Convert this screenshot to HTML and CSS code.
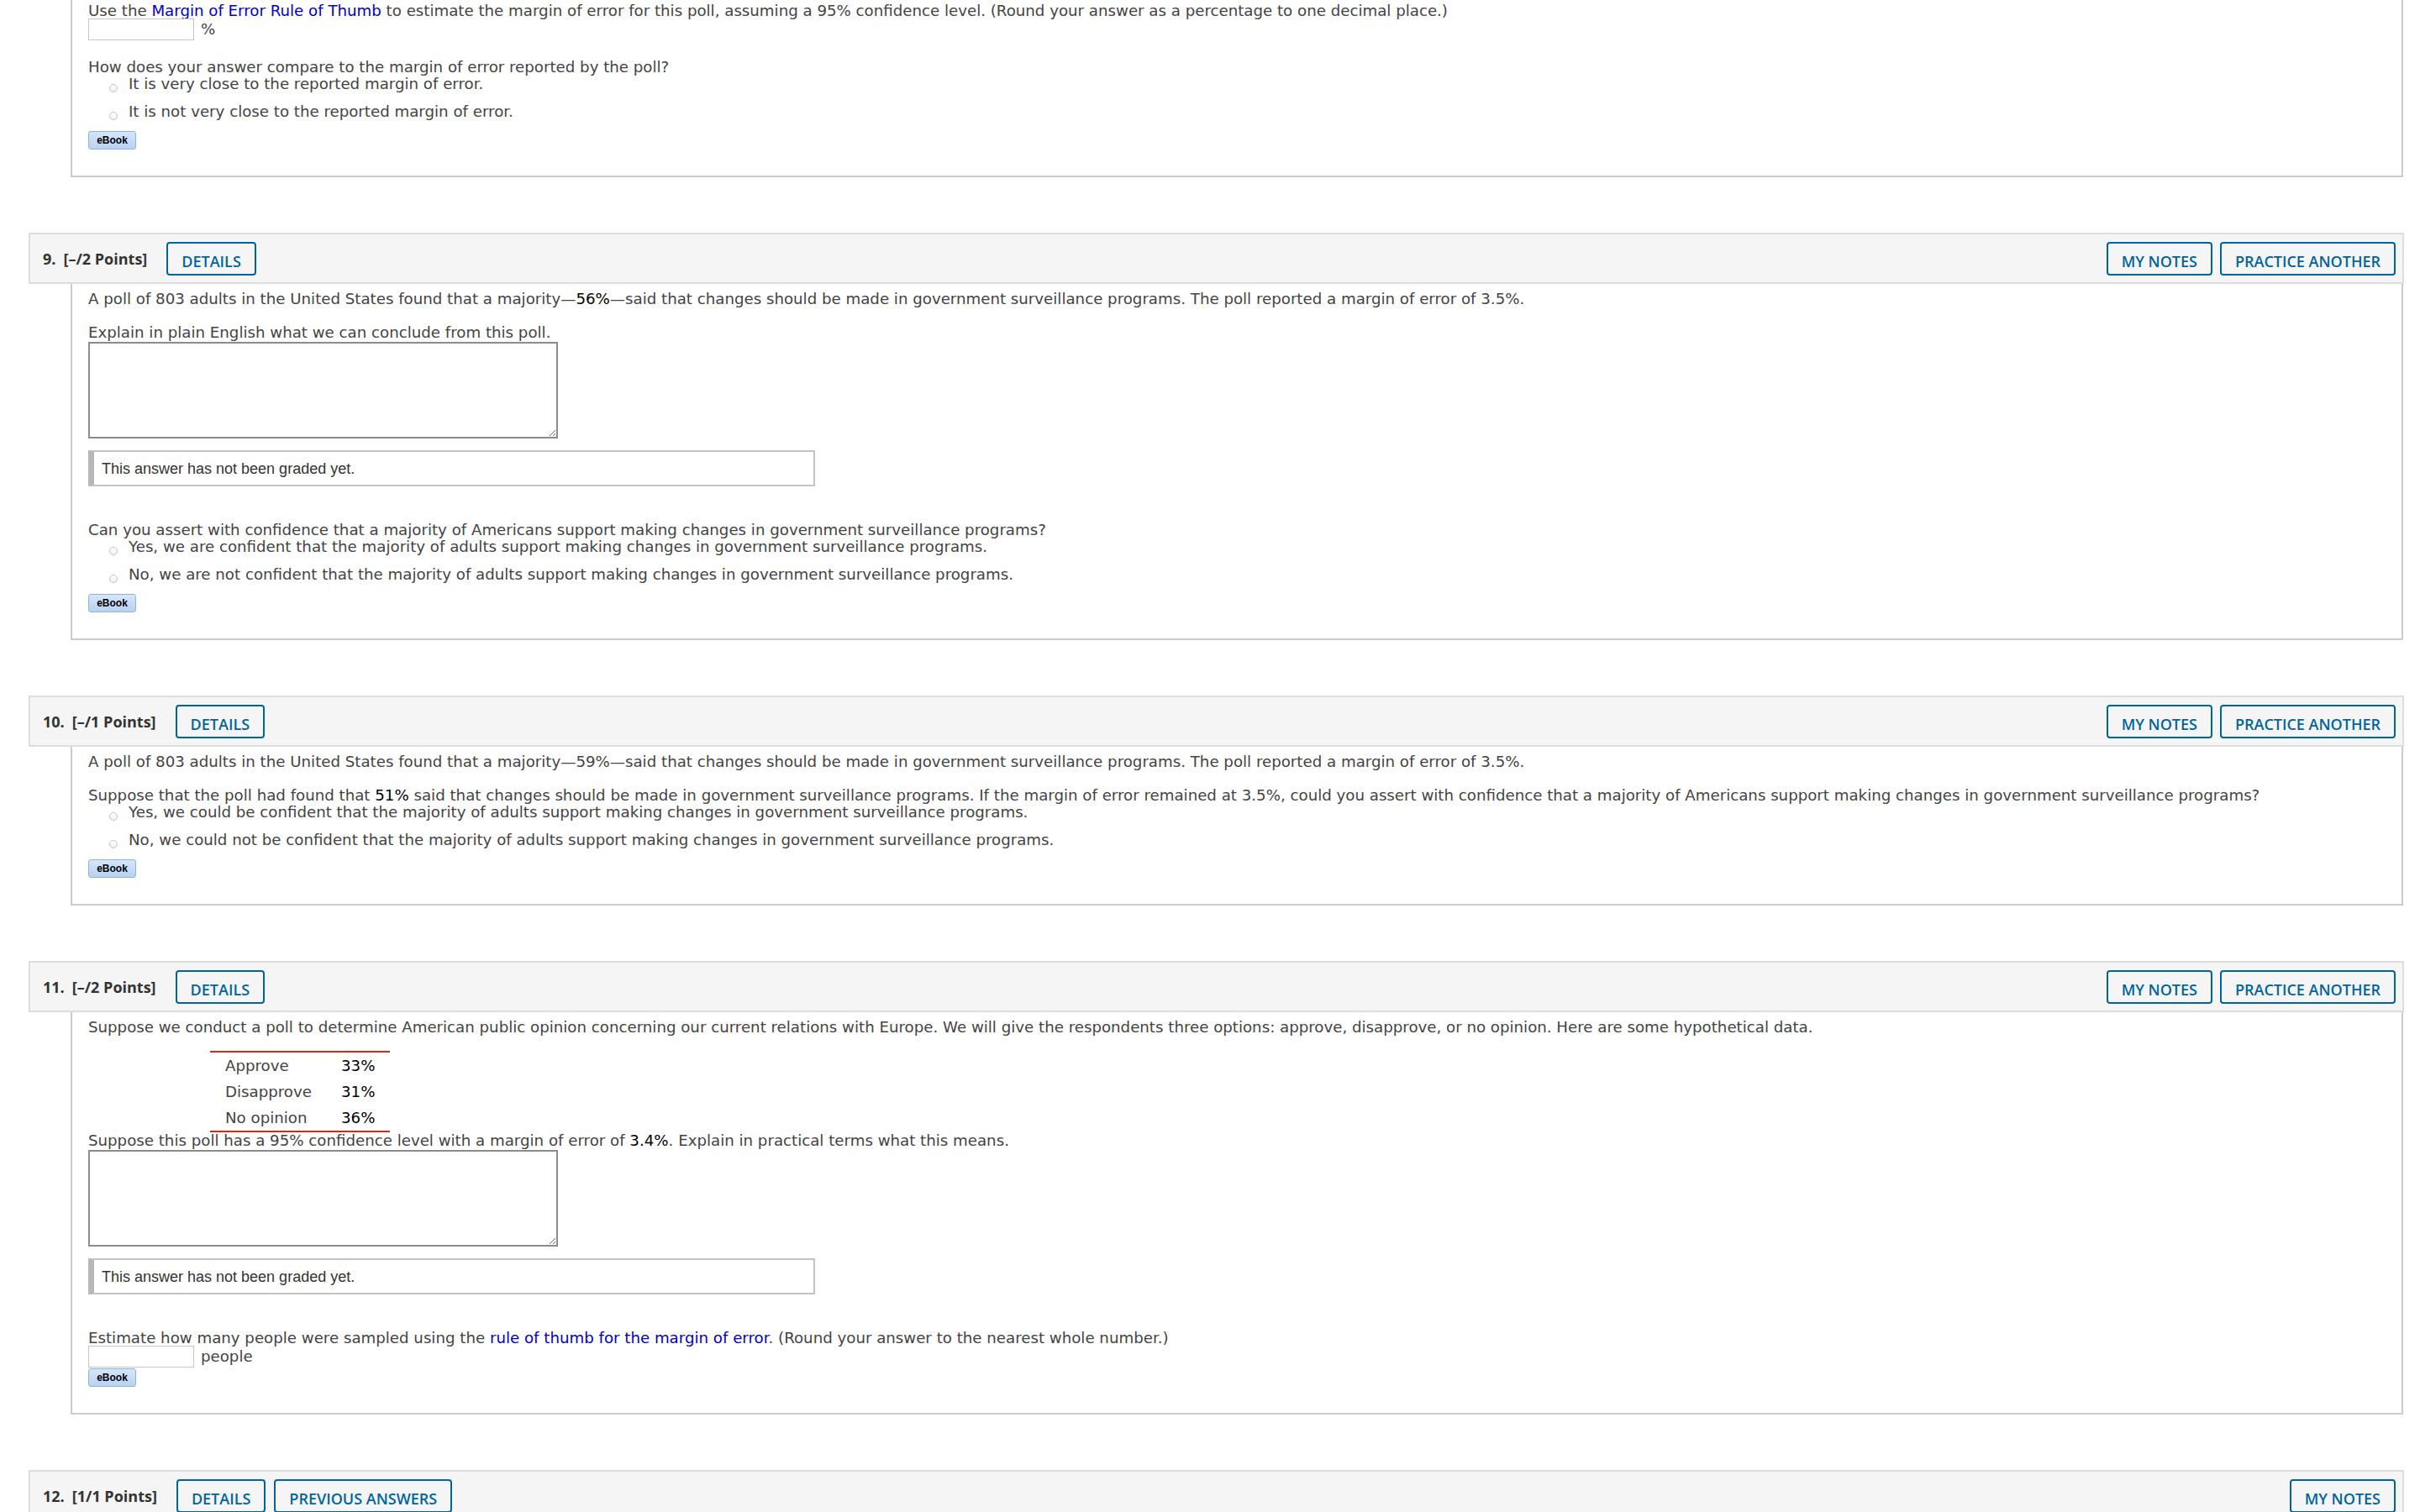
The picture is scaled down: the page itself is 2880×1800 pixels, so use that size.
FILE: index.html
```html
<!DOCTYPE html>
<html lang="en">
<head>
<meta charset="utf-8">
<title>Questions</title>
<link rel="stylesheet" href="styles.css">
</head>
<body>
<div class="page">

  <section class="question question-first">
    <div class="q-body q-body-cont">
      <p class="line">Use the <a class="link" href="#">Margin of Error Rule of Thumb</a> to estimate the margin of error for this poll, assuming a 95% confidence level. (Round your answer as a percentage to one decimal place.)</p>
      <div class="input-row"><input class="ans-input" type="text"><span>%</span></div>
      <p class="line gap-22">How does your answer compare to the margin of error reported by the poll?</p>
      <div class="choice"><span class="radio"></span><span>It is very close to the reported margin of error.</span></div>
      <div class="choice"><span class="radio"></span><span>It is not very close to the reported margin of error.</span></div>
      <button class="ebook" type="button">eBook</button>
    </div>
  </section>

  <section class="question">
    <div class="q-head">
      <div class="q-label"><span>9.</span><span>[–/2 Points]</span></div>
      <div class="head-left"><button class="btn" type="button">DETAILS</button></div>
      <div class="head-right"><button class="btn" type="button">MY NOTES</button><button class="btn" type="button">PRACTICE ANOTHER</button></div>
    </div>
    <div class="q-body">
      <p class="line">A poll of 803 adults in the United States found that a majority—<span class="num">56%</span>—said that changes should be made in government surveillance programs. The poll reported a margin of error of 3.5%.</p>
      <p class="line gap-20">Explain in plain English what we can conclude from this poll.</p>
      <textarea class="essay"></textarea>
      <div class="graded">This answer has not been graded yet.</div>
      <p class="line gap-42">Can you assert with confidence that a majority of Americans support making changes in government surveillance programs?</p>
      <div class="choice"><span class="radio"></span><span>Yes, we are confident that the majority of adults support making changes in government surveillance programs.</span></div>
      <div class="choice"><span class="radio"></span><span>No, we are not confident that the majority of adults support making changes in government surveillance programs.</span></div>
      <button class="ebook" type="button">eBook</button>
    </div>
  </section>

  <section class="question">
    <div class="q-head">
      <div class="q-label"><span>10.</span><span>[–/1 Points]</span></div>
      <div class="head-left"><button class="btn" type="button">DETAILS</button></div>
      <div class="head-right"><button class="btn" type="button">MY NOTES</button><button class="btn" type="button">PRACTICE ANOTHER</button></div>
    </div>
    <div class="q-body">
      <p class="line">A poll of 803 adults in the United States found that a majority—59%—said that changes should be made in government surveillance programs. The poll reported a margin of error of 3.5%.</p>
      <p class="line gap-20">Suppose that the poll had found that <span class="num">51%</span> said that changes should be made in government surveillance programs. If the margin of error remained at 3.5%, could you assert with confidence that a majority of Americans support making changes in government surveillance programs?</p>
      <div class="choice"><span class="radio"></span><span>Yes, we could be confident that the majority of adults support making changes in government surveillance programs.</span></div>
      <div class="choice"><span class="radio"></span><span>No, we could not be confident that the majority of adults support making changes in government surveillance programs.</span></div>
      <button class="ebook" type="button">eBook</button>
    </div>
  </section>

  <section class="question">
    <div class="q-head">
      <div class="q-label"><span>11.</span><span>[–/2 Points]</span></div>
      <div class="head-left"><button class="btn" type="button">DETAILS</button></div>
      <div class="head-right"><button class="btn" type="button">MY NOTES</button><button class="btn" type="button">PRACTICE ANOTHER</button></div>
    </div>
    <div class="q-body">
      <p class="line">Suppose we conduct a poll to determine American public opinion concerning our current relations with Europe. We will give the respondents three options: approve, disapprove, or no opinion. Here are some hypothetical data.</p>
      <table class="data">
        <tr><td class="lbl">Approve</td><td class="val num">33%</td></tr>
        <tr><td class="lbl">Disapprove</td><td class="val num">31%</td></tr>
        <tr><td class="lbl">No opinion</td><td class="val num">36%</td></tr>
      </table>
      <p class="line">Suppose this poll has a 95% confidence level with a margin of error of <span class="num">3.4%</span>. Explain in practical terms what this means.</p>
      <textarea class="essay"></textarea>
      <div class="graded">This answer has not been graded yet.</div>
      <p class="line gap-42">Estimate how many people were sampled using the <a class="link" href="#">rule of thumb for the margin of error</a>. (Round your answer to the nearest whole number.)</p>
      <div class="input-row"><input class="ans-input" type="text"><span>people</span></div>
      <button class="ebook ebook-tight" type="button">eBook</button>
    </div>
  </section>

  <section class="question">
    <div class="q-head">
      <div class="q-label"><span>12.</span><span>[1/1 Points]</span></div>
      <div class="head-left"><button class="btn" type="button">DETAILS</button><button class="btn" type="button">PREVIOUS ANSWERS</button></div>
      <div class="head-right"><button class="btn" type="button">MY NOTES</button></div>
    </div>
  </section>

</div>
</body>
</html>
```

FILE: styles.css
```css
* {
  box-sizing: border-box;
}

html, body {
  margin: 0;
  padding: 0;
  background: #ffffff;
}

body {
  font-family: "DejaVu Sans", Verdana, sans-serif;
  font-size: 18.2px;
  line-height: 20px;
  color: #444444;
}

.page {
  padding: 0 19px 0 34px;
}

.question + .question {
  margin-top: 66px;
}

.q-head {
  display: flex;
  align-items: center;
  height: 61px;
  padding: 0 8px 0 15px;
  background: #f5f5f5;
  border: 2px solid #dddddd;
}

.q-label {
  display: flex;
  gap: 9px;
  margin-right: 23px;
  font-family: "Open Sans", sans-serif;
  font-weight: 700;
  font-size: 18px;
  color: #333333;
  white-space: nowrap;
}

.head-left {
  display: flex;
  gap: 10px;
}

.head-right {
  display: flex;
  gap: 9px;
  margin-left: auto;
}

.btn {
  height: 40px;
  margin: 0;
  padding: 6px 16px 0;
  line-height: 30px;
  border: 2px solid #00659c;
  border-radius: 4px;
  background: transparent;
  font-family: "Open Sans", sans-serif;
  font-weight: 600;
  font-size: 18px;
  color: #00659c;
  white-space: nowrap;
}

.q-body {
  margin: 0 1px 0 50px;
  padding: 8px 19px 31px;
  border: 2px solid #cccccc;
  border-top: none;
}

.q-body-cont {
  padding-top: 3px;
}

.line {
  margin: 0;
}

.gap-20 {
  margin-top: 20px;
}

.gap-22 {
  margin-top: 22px;
}

.gap-42 {
  margin-top: 42px;
}

.link {
  color: #0000cc;
  text-decoration: none;
}

.num {
  color: #000000;
}

.input-row {
  display: flex;
  align-items: center;
  gap: 8px;
  margin-top: -1px;
}

.ans-input {
  width: 126px;
  height: 26px;
  margin: 0;
  padding: 2px 4px;
  border: 1px solid #c6c6c6;
  background: #ffffff;
  font: inherit;
}

.choice {
  display: flex;
  align-items: flex-start;
  padding-left: 25px;
  margin-bottom: 13px;
}

.radio {
  flex: none;
  width: 10px;
  height: 10px;
  margin-top: 10px;
  margin-right: 13px;
  border: 1px solid #c4c4c4;
  border-radius: 50%;
  background: linear-gradient(#ffffff, #f0f0f0);
}

.ebook {
  display: block;
  width: 57px;
  height: 22px;
  margin: 0;
  padding: 0;
  border: 1px solid #8fb3dd;
  border-radius: 3px;
  background: linear-gradient(#d5e6fa, #b8d2f1);
  font-family: "Liberation Sans", Arial, sans-serif;
  font-weight: 700;
  font-size: 12px;
  line-height: 20px;
  color: #000000;
}

.ebook-tight {
  margin-top: 1px;
}

.essay {
  display: block;
  width: 559px;
  height: 115px;
  margin: 1px 0 0;
  border: 2px solid #8c8c8c;
  background: #ffffff;
  font: inherit;
}

.graded {
  display: flex;
  align-items: center;
  width: 865px;
  height: 43px;
  margin-top: 14px;
  padding-left: 9px;
  border: 2px solid #c4c4c4;
  border-left: 7px solid #b8b8b8;
  font-family: "Liberation Sans", Arial, sans-serif;
  font-size: 18px;
  color: #333333;
}

.data {
  margin: 18px 0 0 145px;
  width: 214px;
  border-collapse: collapse;
  border-top: 2px solid #e2231a;
  border-bottom: 2px solid #e2231a;
}

.data td {
  padding: 5px 0;
  line-height: 21px;
}

.data .lbl {
  width: 156px;
  padding-left: 18px;
}
```
